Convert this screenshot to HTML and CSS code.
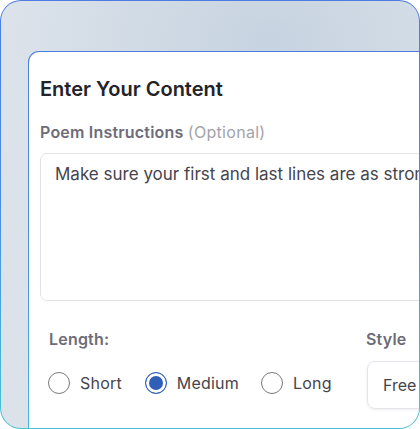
FILE: index.html
```html
<!DOCTYPE html>
<html>
<head>
<meta charset="utf-8">
<link rel="stylesheet" href="styles.css">
</head>
<body>
<div class="frame">
  <div class="frame-inner">
    <div class="card">
      <div class="card-inner">
        <h2 class="title">Enter Your Content</h2>
        <div class="label">Poem Instructions <span class="opt">(Optional)</span></div>
        <div class="textarea">Make sure your first and last lines are as strong as possible</div>
        <div class="options">
          <div class="length">
            <div class="sublabel">Length:</div>
            <div class="radios">
              <label class="radio"><span class="dot"></span>Short</label>
              <label class="radio checked"><span class="dot"></span>Medium</label>
              <label class="radio"><span class="dot"></span>Long</label>
            </div>
          </div>
          <div class="style">
            <div class="sublabel">Style</div>
            <div class="select">Free verse</div>
          </div>
        </div>
      </div>
    </div>
  </div>
</div>
</body>
</html>
```

FILE: styles.css
```css
html, body { margin: 0; padding: 0; background: #fff; }
body { font-family: Inter, "Noto Sans", sans-serif; }
.frame {
  width: 420px; height: 429px; box-sizing: border-box;
  padding: 1px; border-radius: 21px;
  background: linear-gradient(180deg, #4c7ce4 0%, #4a8fe0 50%, #47c3d2 100%);
  overflow: hidden;
}
.frame-inner {
  width: 100%; height: 100%; border-radius: 20px; overflow: hidden;
  background: radial-gradient(ellipse 260px 170px at 270px 40px, #c6d3e0 0%, #d3dce6 60%, #dbe2ea 100%);
  padding: 50px 0 0 27px; box-sizing: border-box;
}
.card {
  width: 520px; height: 420px; box-sizing: border-box;
  padding: 1px; border-radius: 11px 0 0 0;
  background: linear-gradient(180deg, #4c7ce4 0%, #4a92de 50%, #47c0d2 100%);
}
.card-inner {
  background: #fff; height: 100%; border-radius: 10px 0 0 0;
  padding: 24px 0 0 11px; box-sizing: border-box;
}
.title {
  margin: 0; font-size: 20px; font-weight: 600; color: #23232a; line-height: 26px;
}
.label {
  margin-top: 20px; font-size: 16px; font-weight: 600; color: #6d6c78; line-height: 20px;
  letter-spacing: 0.2px;
}
.opt { font-weight: 400; color: #a4a3ab; letter-spacing: 0.3px; }
.textarea {
  margin-top: 11px; height: 148px; box-sizing: border-box; width: 480px;
  border: 1px solid #e2e2e8; border-radius: 7px;
  padding: 9px 14px; font-size: 17px; color: #45444d; line-height: 22px; white-space: nowrap;
}
.options { display: flex; padding-left: 9px; margin-top: 28px; }
.length { width: 317px; }
.sublabel { font-size: 16px; font-weight: 600; color: #6d6c78; line-height: 20px; letter-spacing: 0.2px; }
.radios { display: flex; margin-top: 23px; }
.radio { display: flex; align-items: center; font-size: 16px; color: #45444d; margin-right: 24px; letter-spacing: 0.2px; }
.radio.checked { margin-right: 23px; }
.dot {
  width: 22px; height: 22px; border-radius: 50%; border: 1.5px solid #7a7a80; box-sizing: border-box;
  margin-left: -1px; margin-right: 10px; background: #fff;
}
.radio.checked .dot {
  border: 1.5px solid #2f62bc; background: #2f5fb6; box-shadow: inset 0 0 0 3px #fff;
}
.select {
  margin-top: 12px; margin-left: 1px; height: 48px; width: 120px; box-sizing: border-box;
  border: 1px solid #e4e4ea; border-radius: 8px; box-shadow: 0 1px 3px rgba(0,0,0,0.08);
  padding: 0 15px; display: flex; align-items: center; font-size: 16px; color: #45444d; white-space: nowrap;
}
```
